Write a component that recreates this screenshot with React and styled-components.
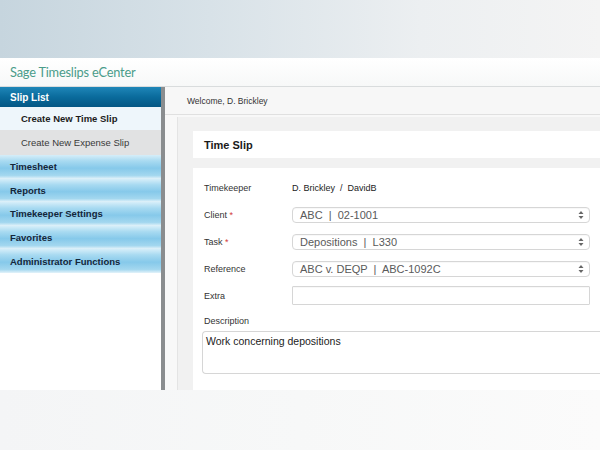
import React from "react";
import styled, { createGlobalStyle } from "styled-components";

const GlobalStyle = createGlobalStyle`
  html, body {
    margin: 0;
    padding: 0;
    background: #f5f6f7;
    font-family: "Liberation Sans", Arial, sans-serif;
  }
`;

const navItems = [
  "Timesheet",
  "Reports",
  "Timekeeper Settings",
  "Favorites",
  "Administrator Functions",
];

const fields = [
  { label: "Client", required: true, value: "ABC  |  02-1001", select: true },
  { label: "Task", required: true, value: "Depositions  |  L330", select: true },
  { label: "Reference", value: "ABC v. DEQP  |  ABC-1092C", select: true },
  { label: "Extra", value: "" },
];

const SelectArrows = () => (
  <svg width="6" height="10" viewBox="0 0 6 10">
    <path d="M3 1 L5.5 4 H0.5 Z" fill="#666" />
    <path d="M3 9 L5.5 6 H0.5 Z" fill="#666" />
  </svg>
);

const App = () => {
  return (
    <Page>
      <GlobalStyle />
      <TopBand />
      <Header>
        <Logo>Sage Timeslips eCenter</Logo>
      </Header>
      <Body>
        <Sidebar>
          <SectionHead>Slip List</SectionHead>
          <SubItem active>Create New Time Slip</SubItem>
          <SubItem>Create New Expense Slip</SubItem>
          {navItems.map((n) => (
            <NavItem key={n}>{n}</NavItem>
          ))}
        </Sidebar>
        <Main>
          <Welcome>Welcome, D. Brickley</Welcome>
          <Panel>
            <CardHead>Time Slip</CardHead>
            <FormCard>
              <Row>
                <Label>Timekeeper</Label>
                <Value>D. Brickley  /  DavidB</Value>
              </Row>
              {fields.map((f) => (
                <Row key={f.label}>
                  <Label>
                    {f.label}
                    {f.required && <Req> *</Req>}
                  </Label>
                  <Field select={f.select}>
                    <span>{f.value}</span>
                    {f.select && <SelectArrows />}
                  </Field>
                </Row>
              ))}
              <DescLabel>Description</DescLabel>
              <TextArea>Work concerning depositions</TextArea>
            </FormCard>
          </Panel>
        </Main>
      </Body>
      <Fade />
    </Page>
  );
};

const Page = styled.div`
  width: 600px;
  height: 450px;
  overflow: hidden;
  display: flex;
  flex-direction: column;
  background: #f6f7f8;
`;
const TopBand = styled.div`
  height: 58px;
  flex-shrink: 0;
  background: linear-gradient(90deg, #c6d5de 0%, #d8e2e8 35%, #eceff1 70%, #f4f4f4 100%);
`;
const Header = styled.div`
  height: 28px;
  flex-shrink: 0;
  display: flex;
  align-items: center;
  padding-left: 10px;
  background: linear-gradient(180deg, #ffffff 0%, #f7f8f8 100%);
  border-bottom: 1px solid #d9dcdd;
`;
const Logo = styled.div`
  font-family: "Lato", "Open Sans", sans-serif;
  font-size: 12.8px;
  color: #4a9c8a;
  letter-spacing: -0.2px;
`;
const Body = styled.div`
  height: 303px;
  flex-shrink: 0;
  display: flex;
`;
const Sidebar = styled.div`
  width: 161px;
  flex-shrink: 0;
  background: #ffffff;
  border-right: 4px solid #8a8d8f;
  box-shadow: 1px 0 0 #c8c8c8;
  display: flex;
  flex-direction: column;
`;
const SectionHead = styled.div`
  height: 20px;
  display: flex;
  align-items: center;
  padding-left: 10px;
  background: linear-gradient(180deg, #1f86b8 0%, #0a6b9c 50%, #045784 100%);
  color: #ffffff;
  font-weight: bold;
  font-size: 10px;
`;
const SubItem = styled.div`
  height: ${(p) => (p.active ? 23 : 25)}px;
  display: flex;
  align-items: center;
  padding-left: 21px;
  font-size: 9.5px;
  font-weight: ${(p) => (p.active ? "bold" : "normal")};
  color: ${(p) => (p.active ? "#1c1c1c" : "#3a3a3a")};
  background: ${(p) => (p.active ? "#eef6fb" : "#e1e2e3")};
`;
const NavItem = styled.div`
  height: 23.6px;
  display: flex;
  align-items: center;
  padding-left: 10px;
  font-size: 9.5px;
  font-weight: bold;
  color: #14263a;
  background: linear-gradient(
    180deg,
    #d6eef9 0%,
    #a8daf1 25%,
    #86c9ea 55%,
    #a3d7ef 85%,
    #e4f3fa 100%
  );
`;
const Main = styled.div`
  flex: 1;
  display: flex;
  flex-direction: column;
  background: #f8f8f8;
`;
const Welcome = styled.div`
  height: 27px;
  flex-shrink: 0;
  display: flex;
  align-items: center;
  padding-left: 22px;
  font-size: 8.5px;
  color: #333;
  background: #f7f7f7;
  border-bottom: 1px solid #e0e0e0;
`;
const Panel = styled.div`
  flex: 1;
  margin: 2px 0 0 12px;
  padding: 14px 0 0 15px;
  background: #f1f1f1;
  border-left: 1px solid #e4e4e4;
  display: flex;
  flex-direction: column;
`;
const CardHead = styled.div`
  height: 27px;
  flex-shrink: 0;
  display: flex;
  align-items: center;
  padding-left: 11px;
  background: #ffffff;
  font-weight: bold;
  font-size: 11px;
  color: #1a1a1a;
`;
const FormCard = styled.div`
  flex: 1;
  margin-top: 10px;
  background: #ffffff;
  padding: 6px 0 0 11px;
  display: flex;
  flex-direction: column;
`;
const Row = styled.div`
  height: 27px;
  display: flex;
  align-items: center;
`;
const Label = styled.div`
  width: 88px;
  font-size: 9px;
  color: #333;
`;
const Req = styled.span`
  color: #d23a3a;
`;
const Value = styled.div`
  font-size: 9px;
  color: #222;
  white-space: pre;
`;
const Field = styled.div`
  width: 298px;
  height: ${(p) => (p.select ? 16 : 19)}px;
  box-sizing: border-box;
  border: 1px solid #d6d6d6;
  border-radius: ${(p) => (p.select ? 4 : 1)}px;
  background: #ffffff;
  display: flex;
  align-items: center;
  justify-content: space-between;
  padding: 0 5px 0 7px;
  font-size: 11px;
  color: #5a5a5a;
  white-space: pre;
  box-shadow: inset 0 1px 1px rgba(0, 0, 0, 0.03);
`;
const DescLabel = styled.div`
  margin-top: 7px;
  font-size: 9px;
  color: #333;
`;
const TextArea = styled.div`
  margin: 5px 0 0 -2px;
  height: 43px;
  box-sizing: border-box;
  border: 1px solid #d6d6d6;
  border-right: none;
  border-radius: 4px 0 0 4px;
  padding: 3px 0 0 3px;
  font-size: 10.5px;
  color: #222;
`;
const Fade = styled.div`
  flex: 1;
  background: linear-gradient(90deg, #f4f5f6 0%, #f7f8f8 50%, #fbfbfb 100%);
`;

export default App;
